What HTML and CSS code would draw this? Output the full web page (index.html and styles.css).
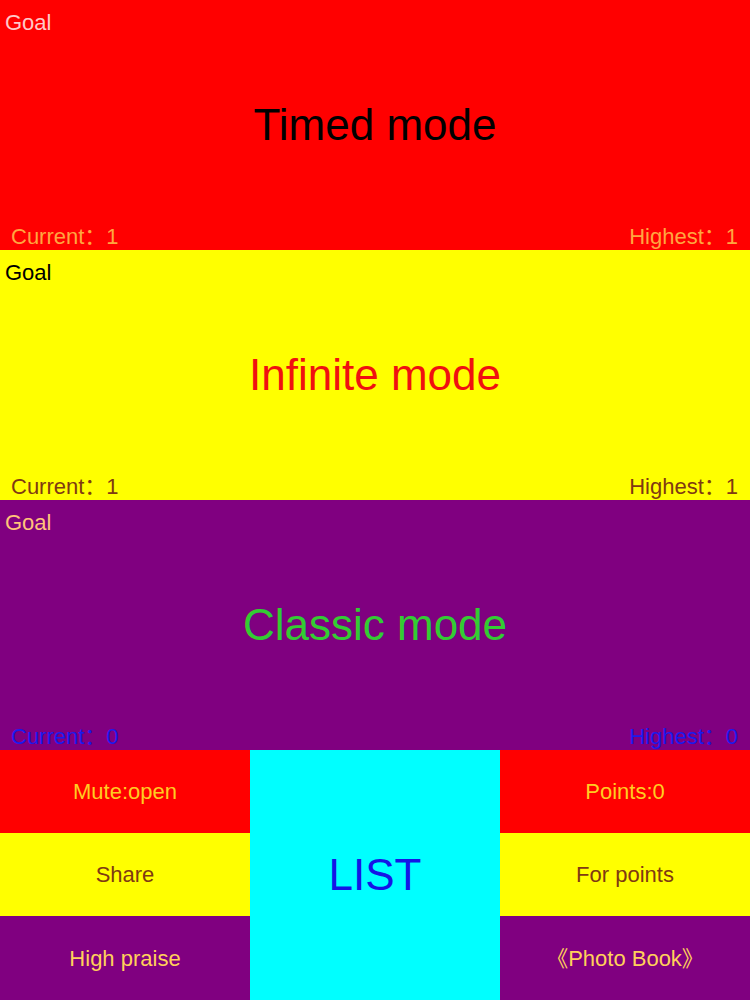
FILE: index.html
```html
<!DOCTYPE html>
<html>
<head>
<meta charset="utf-8">
<link rel="stylesheet" href="styles.css">
</head>
<body>
<div class="page">
  <section class="band band-red">
    <div class="goal">Goal</div>
    <div class="title">Timed mode</div>
    <div class="stats"><span>Current：1</span><span>Highest：1</span></div>
  </section>
  <section class="band band-yellow">
    <div class="goal">Goal</div>
    <div class="title">Infinite mode</div>
    <div class="stats"><span>Current：1</span><span>Highest：1</span></div>
  </section>
  <section class="band band-purple">
    <div class="goal">Goal</div>
    <div class="title">Classic mode</div>
    <div class="stats"><span>Current：0</span><span>Highest：0</span></div>
  </section>
  <section class="menu">
    <div class="col">
      <div class="btn btn-red">Mute:open</div>
      <div class="btn btn-yellow">Share</div>
      <div class="btn btn-purple">High praise</div>
    </div>
    <div class="list">LIST</div>
    <div class="col">
      <div class="btn btn-red">Points:0</div>
      <div class="btn btn-yellow">For points</div>
      <div class="btn btn-purple book">《Photo Book》</div>
    </div>
  </section>
</div>
</body>
</html>
```
FILE: styles.css
```css
html, body {
  margin: 0;
  padding: 0;
}
body {
  font-family: "Liberation Sans", Arial, "Noto Sans CJK SC", sans-serif;
  width: 750px;
  height: 1000px;
  overflow: hidden;
}
.page {
  display: flex;
  flex-direction: column;
  width: 750px;
}
.band {
  height: 250px;
  display: grid;
  grid-template-columns: 1fr;
  grid-template-rows: 1fr;
}
.band > * {
  grid-column: 1;
  grid-row: 1;
}
.goal {
  align-self: start;
  font-size: 22px;
  padding: 10px 0 0 5px;
}
.title {
  align-self: center;
  text-align: center;
  font-size: 44px;
  padding-bottom: 1px;
}
.stats {
  align-self: end;
  display: flex;
  justify-content: space-between;
  font-size: 22px;
  line-height: 25px;
  padding: 0 12px 1px 11px;
}
.band-red { background: #ff0000; }
.band-red .goal { color: #ffc8c8; }
.band-red .title { color: #000000; }
.band-red .stats { color: #ffa640; }

.band-yellow { background: #ffff00; }
.band-yellow .goal { color: #000000; }
.band-yellow .title { color: #f01010; }
.band-yellow .stats { color: #7f3a12; }

.band-purple { background: #800080; }
.band-purple .goal { color: #ffc27a; }
.band-purple .title { color: #33cc33; }
.band-purple .stats { color: #1a1aee; }

.menu {
  height: 250px;
  display: grid;
  grid-template-columns: 250px 250px 250px;
}
.col {
  display: grid;
  grid-template-rows: 83px 83px 84px;
}
.btn {
  display: flex;
  align-items: center;
  justify-content: center;
  font-size: 22px;
  line-height: 25px;
}
.btn-red { background: #ff0000; color: #ffcc22; }
.btn-yellow { background: #ffff00; color: #7f3a12; }
.btn-purple { background: #800080; color: #ffd05a; }
.book {
  font-feature-settings: "halt";
}
.list {
  background: #00ffff;
  display: flex;
  align-items: center;
  justify-content: center;
  font-size: 44px;
  color: #1515e6;
}
```
